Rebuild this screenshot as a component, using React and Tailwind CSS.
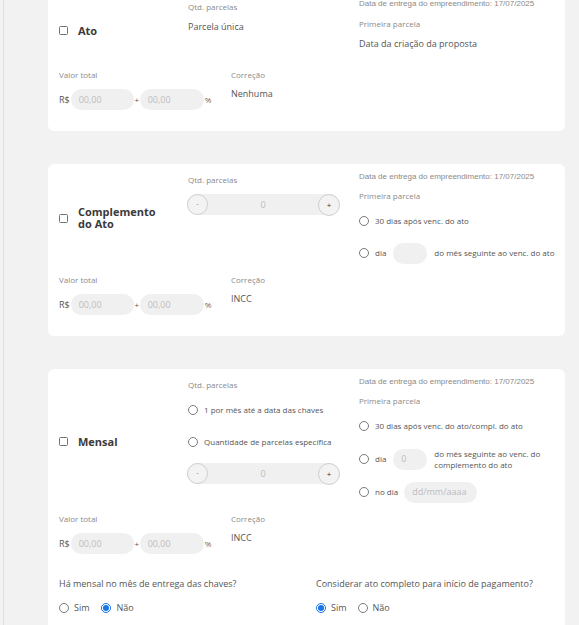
import React from 'react';

const sans = "font-['Open_Sans',sans-serif]";
const arial = "font-['Liberation_Sans',Arial,sans-serif]";

const Label = ({ children, className = '' }) => (
  <p className={`text-[8px] leading-[10px] text-[#8a8a8a] ${className}`}>{children}</p>
);

const DeliveryDate = () => (
  <p className={`${arial} text-[8px] leading-[10px] text-[#8a8a8a]`}>
    Data de entrega do empreendimento: 17/07/2025
  </p>
);

const Checkbox = () => (
  <span className="w-[9px] h-[9px] shrink-0 rounded-[1.5px] border border-[#727272] bg-white" />
);

const Radio = ({ checked }) =>
  checked ? (
    <span className="inline-flex w-[10px] h-[10px] shrink-0 rounded-full border border-[#1a73e8] items-center justify-center">
      <span className="w-[6px] h-[6px] rounded-full bg-[#1a73e8]" />
    </span>
  ) : (
    <span className="inline-block w-[10px] h-[10px] shrink-0 rounded-full border border-[#7a7a7a] bg-white" />
  );

const Pill = ({ w, placeholder = '', className = '' }) => (
  <div
    className={`h-[21px] shrink-0 rounded-full bg-[#f0f0f0] flex items-center pl-[8px] text-[9px] text-[#bdbdbd] ${className}`}
    style={{ width: w }}
  >
    {placeholder}
  </div>
);

const Stepper = () => (
  <div className="-ml-px w-[153px] h-[21px] rounded-full bg-[#f0f0f0] flex items-center">
    <span className="w-[21px] h-[21px] rounded-full border border-[#cfcfcf] bg-[#f3f3f3] flex items-center justify-center text-[7px] text-[#888]">
      -
    </span>
    <span className="flex-1 text-center text-[9px] text-[#bdbdbd]">0</span>
    <span className="w-[22px] h-[22px] rounded-full border border-[#cfcfcf] bg-[#f3f3f3] flex items-center justify-center text-[8px] text-[#333]">
      +
    </span>
  </div>
);

const Title = ({ children, className = '' }) => (
  <div className={`w-[129px] shrink-0 flex items-center gap-[10px] ${className}`}>
    <Checkbox />
    <p className="w-[84px] text-[11px] leading-[12px] font-bold text-[#3a3a3a]">{children}</p>
  </div>
);

const RadioRow = ({ checked, children, className = '' }) => (
  <div className={`h-[20px] flex items-center gap-[6px] text-[8px] text-[#555] ${className}`}>
    <Radio checked={checked} />
    {children}
  </div>
);

const Bottom = ({ correction }) => (
  <div className="mt-[12px] flex">
    <div className="w-[172px] shrink-0">
      <Label>Valor total</Label>
      <div className="mt-[9px] flex items-center text-[9px] text-[#555]">
        <span>R$</span>
        <Pill w="63px" placeholder="00,00" className="ml-px" />
        <span className="w-[6px] text-center text-[8px]">+</span>
        <Pill w="64px" placeholder="00,00" />
        <span className="ml-px text-[8px] text-[#666]">%</span>
      </div>
    </div>
    <div>
      <Label>Correção</Label>
      <p className="mt-[8px] text-[9px] leading-[12px] text-[#555]">{correction}</p>
    </div>
  </div>
);

const Card = ({ children, className = '' }) => (
  <div className={`bg-white rounded-[6px] pt-[8px] pb-[21px] pl-[11px] pr-[10px] ${className}`}>
    {children}
  </div>
);

export default function App() {
  return (
    <div className={`${sans} min-h-[625px] h-[625px] overflow-hidden bg-[#f2f2f2] pl-[3px]`}>
      <div className="h-full border-l border-[#e0e0e0] pl-[44px] pr-[14px] flex flex-col gap-[33px]">
        {/* Ato */}
        <Card className="-mt-[9px]">
          <div className="flex">
            <Title className="pt-[4px]">Ato</Title>
            <div className="w-[171px] shrink-0 pt-[3px]">
              <Label>Qtd. parcelas</Label>
              <p className="mt-[9px] text-[9px] leading-[12px] text-[#555]">Parcela única</p>
            </div>
            <div className="flex-1 pb-[8px]">
              <DeliveryDate />
              <Label className="mt-[10px]">Primeira parcela</Label>
              <p className="mt-[9px] text-[9px] leading-[12px] text-[#555]">Data da criação da proposta</p>
            </div>
          </div>
          <Bottom correction="Nenhuma" />
        </Card>

        {/* Complemento do Ato */}
        <Card>
          <div className="flex">
            <Title className="pt-[1px]">Complemento do Ato</Title>
            <div className="w-[171px] shrink-0 pt-[3px]">
              <Label>Qtd. parcelas</Label>
              <div className="mt-[9px]">
                <Stepper />
              </div>
            </div>
            <div className="flex-1">
              <DeliveryDate />
              <Label className="mt-[9px]">Primeira parcela</Label>
              <RadioRow className="mt-[10px]">30 dias após venc. do ato</RadioRow>
              <RadioRow className="mt-[12px]">
                <span>dia</span>
                <Pill w="34px" className="ml-px" />
                <span className="ml-px">do mês seguinte ao venc. do ato</span>
              </RadioRow>
            </div>
          </div>
          <Bottom correction="INCC" />
        </Card>

        {/* Mensal */}
        <Card className="shrink-0">
          <div className="flex">
            <Title className="pt-[4px]">Mensal</Title>
            <div className="w-[171px] shrink-0 pt-[3px]">
              <Label>Qtd. parcelas</Label>
              <RadioRow className="mt-[10px]">1 por mês até a data das chaves</RadioRow>
              <RadioRow className="mt-[12px]">Quantidade de parcelas específica</RadioRow>
              <div className="mt-[11px]">
                <Stepper />
              </div>
            </div>
            <div className="flex-1">
              <DeliveryDate />
              <Label className="mt-[9px]">Primeira parcela</Label>
              <RadioRow className="mt-[10px]">30 dias após venc. do ato/compl. do ato</RadioRow>
              <RadioRow className="mt-[13px]">
                <span>dia</span>
                <Pill w="34px" placeholder="0" className="ml-px" />
                <span className="ml-px leading-[11px]">do mês seguinte ao venc. do complemento do ato</span>
              </RadioRow>
              <RadioRow className="mt-[13px]">
                <span>no dia</span>
                <Pill w="73px" placeholder="dd/mm/aaaa" />
              </RadioRow>
            </div>
          </div>
          <Bottom correction="INCC" />
          <div className="mt-[24px] grid grid-cols-2 gap-x-[18px] text-[9px] text-[#555]">
            <div>
              <p className="leading-[12px]">Há mensal no mês de entrega das chaves?</p>
              <div className="mt-[11px] h-[14px] flex items-center">
                <Radio />
                <span className="ml-[5px]">Sim</span>
                <span className="ml-[11px] flex"><Radio checked /></span>
                <span className="ml-[6px]">Não</span>
              </div>
            </div>
            <div>
              <p className="leading-[12px]">Considerar ato completo para início de pagamento?</p>
              <div className="mt-[11px] h-[14px] flex items-center">
                <Radio checked />
                <span className="ml-[5px]">Sim</span>
                <span className="ml-[11px] flex"><Radio /></span>
                <span className="ml-[5px]">Não</span>
              </div>
            </div>
          </div>
          <div className="h-[20px]" />
        </Card>
      </div>
    </div>
  );
}
